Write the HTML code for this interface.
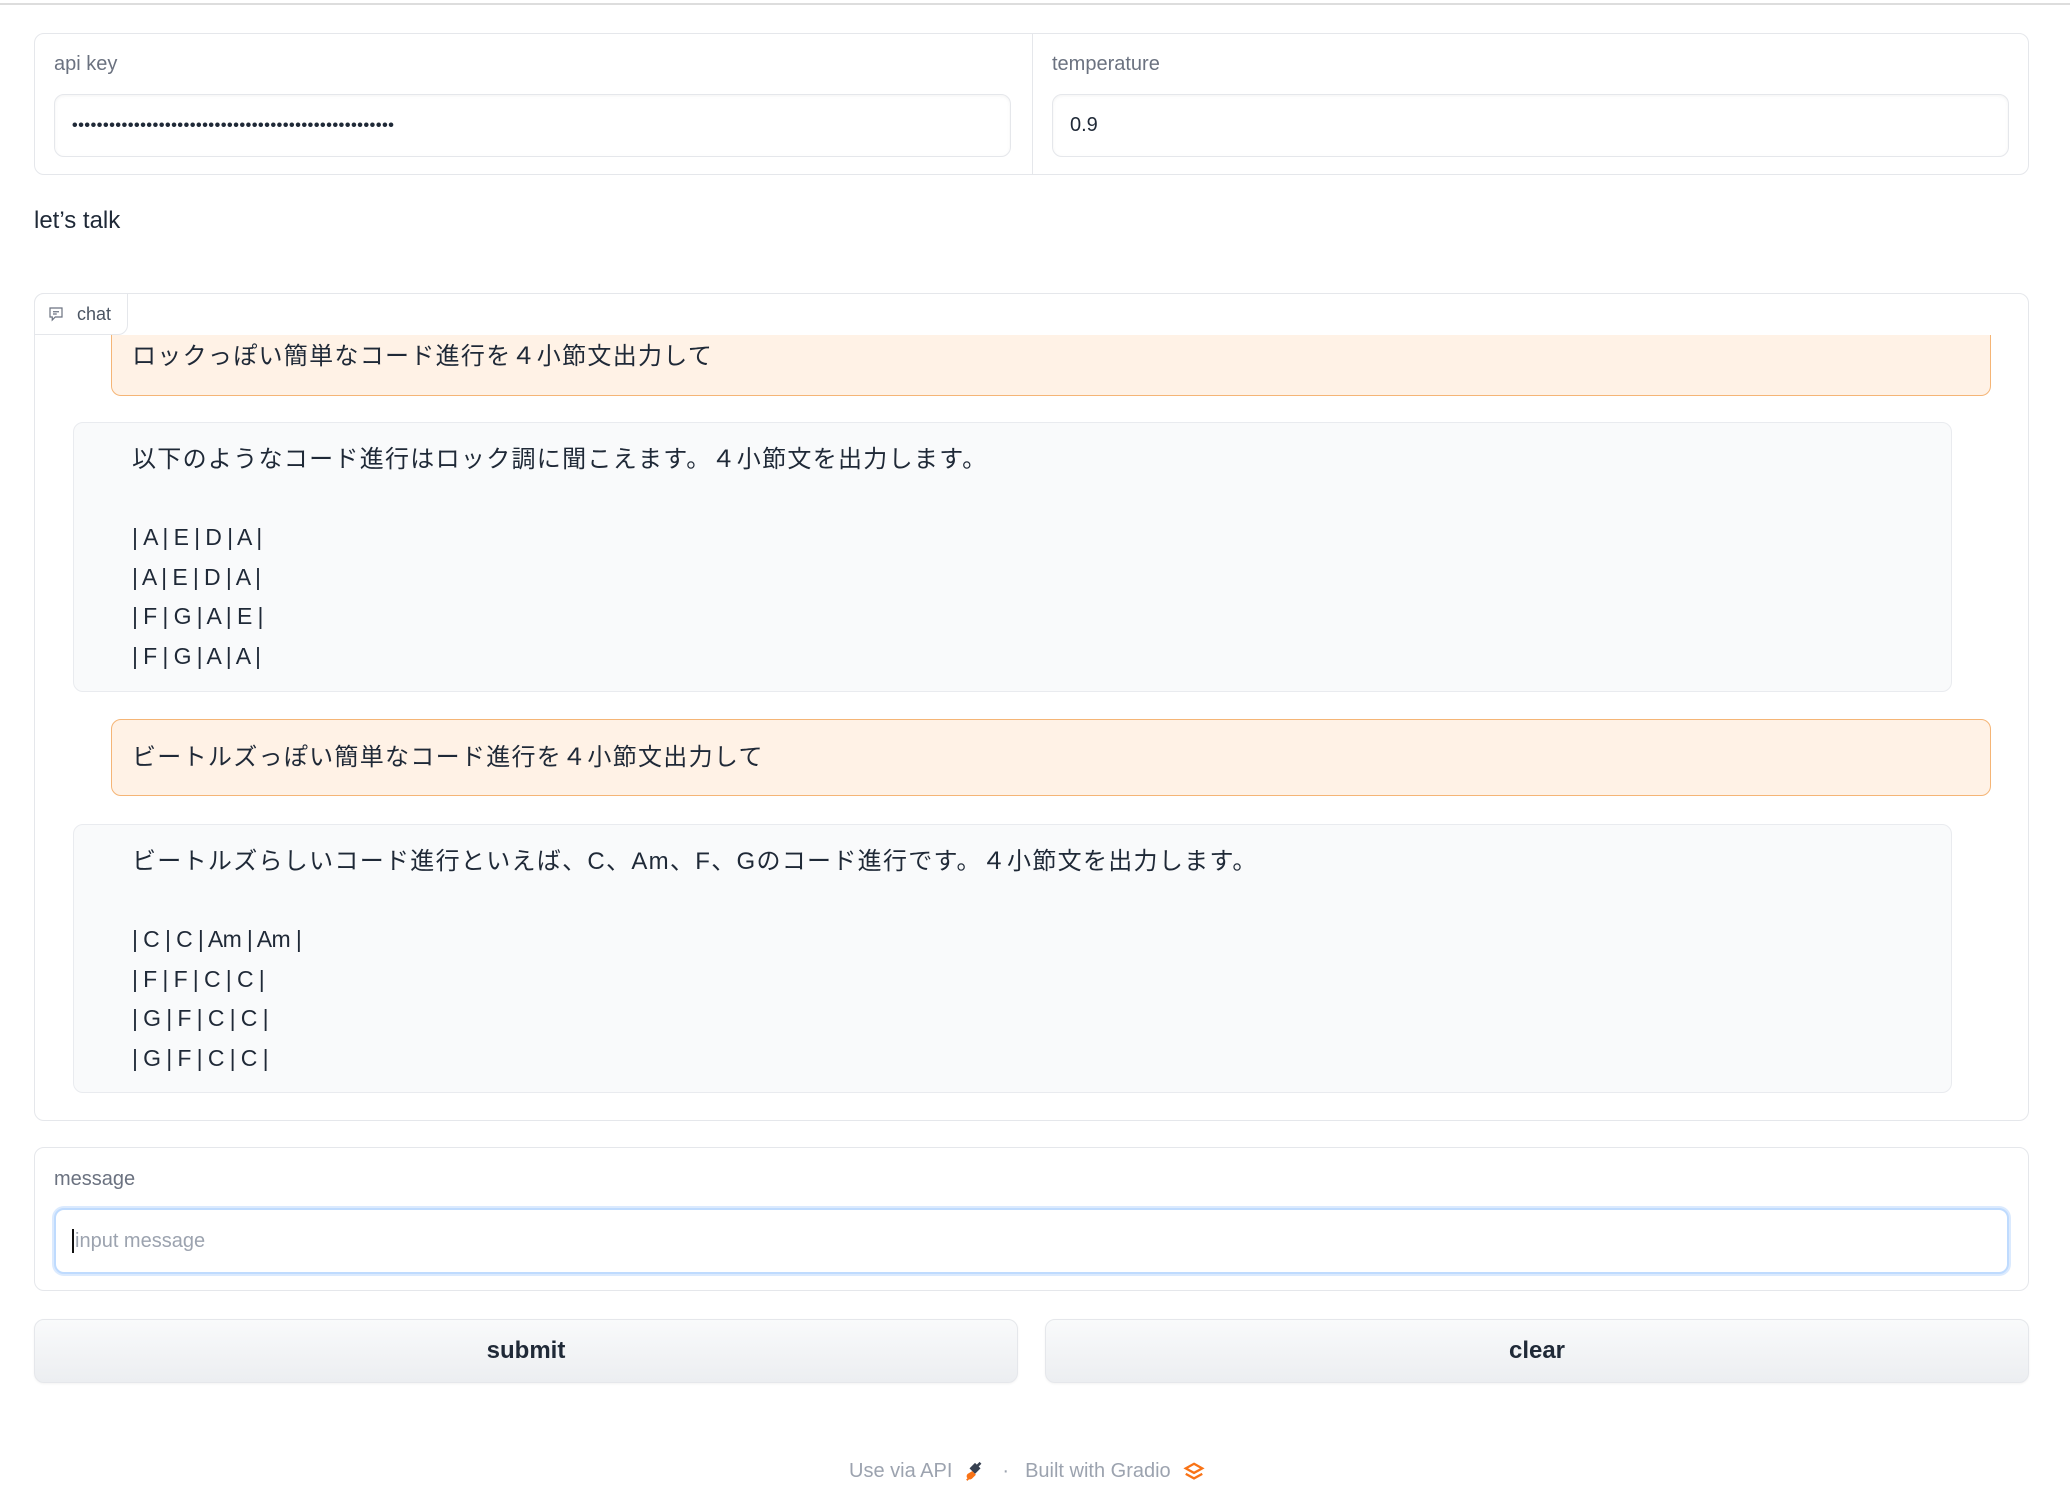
<!DOCTYPE html>
<html><head><meta charset="utf-8">
<style>
*{box-sizing:border-box;margin:0;padding:0}
html,body{width:2070px;height:1494px;background:#fff;overflow:hidden}
body{font-family:"Liberation Sans","Noto Sans CJK JP",sans-serif;color:#1f2937;position:relative}
.abs{position:absolute}
.topline{left:0;top:0;width:2070px;height:5px;border-bottom:2px solid #ddd}
.panel{border:1px solid #e5e7eb;border-radius:10px;background:#fff}
.label{font-size:20px;color:#6b7280}
.inp{border:1px solid #e5e7eb;border-radius:10px;background:#fff;box-shadow:inset 0 1px 3px rgba(0,0,0,.05);font-size:20px;display:flex;align-items:center;padding-left:17px}
.user{background:#fff2e6;border:1px solid #f5b576;border-radius:10px}
.bot{background:#f9fafb;border:1px solid #e9ebef;border-radius:10px}
.t{font-size:24px;color:#1f2937;line-height:38.5px}
.j{letter-spacing:1.3px}
.c{font-size:23px;letter-spacing:-0.6px}
.btn{background:linear-gradient(#f9fafb,#eceef1);border:1px solid #e5e7eb;border-radius:10px;font-weight:bold;font-size:24px;display:flex;align-items:center;justify-content:center;color:#1f2937;box-shadow:0 1px 2px rgba(0,0,0,.05)}
</style></head><body>
<div class="abs topline"></div>

<div class="abs panel" style="left:34px;top:33px;width:1995px;height:142px"></div>
<div class="abs" style="left:1032px;top:33px;width:1px;height:142px;background:#e5e7eb"></div>
<div class="abs label" style="left:54px;top:53px">api key</div>
<div class="abs inp" style="left:54px;top:94px;width:957px;height:63px;font-size:16px;letter-spacing:0.6px;font-weight:bold">••••••••••••••••••••••••••••••••••••••••••••••••••••</div>
<div class="abs label" style="left:1052px;top:53px">temperature</div>
<div class="abs inp" style="left:1052px;top:94px;width:957px;height:63px">0.9</div>

<div class="abs" style="left:34px;top:207px;font-size:24px;color:#1f2937">let’s talk</div>

<div class="abs panel" style="left:34px;top:293px;width:1995px;height:828px"></div>
<div class="abs" style="left:34px;top:293px;width:94px;height:42px;border:1px solid #e5e7eb;border-radius:10px 0 10px 0;background:#fff;display:flex;align-items:center;padding-left:12px;font-size:18px;color:#4b5563">
<svg width="18" height="18" viewBox="0 0 24 24" fill="none" stroke="#6b7280" stroke-width="1.6" style="margin-right:12px"><path d="M4 4h16v12h-9l-4 4v-4H4z"/><path d="M8 9h8M8 12h5"/></svg>chat</div>

<div class="abs user" style="left:111px;top:335px;width:1880px;height:61px;border-top:none;border-radius:0 0 10px 10px"></div>
<div class="abs t" style="left:132px;top:338px"><span class="j">ロックっぽい簡単なコード進行を４小節文出力して</span></div>

<div class="abs bot" style="left:73px;top:422px;width:1879px;height:270px"></div>
<div class="abs t" style="left:132px;top:441px"><span class="j">以下のようなコード進行はロック調に聞こえます。４小節文を出力します。</span><br><br><span class="c">| A | E | D | A |<br>| A | E | D | A |<br>| F | G | A | E |<br>| F | G | A | A |</span></div>

<div class="abs user" style="left:111px;top:719px;width:1880px;height:77px"></div>
<div class="abs t" style="left:132px;top:739px"><span class="j">ビートルズっぽい簡単なコード進行を４小節文出力して</span></div>

<div class="abs bot" style="left:73px;top:824px;width:1879px;height:269px"></div>
<div class="abs t" style="left:132px;top:843px"><span class="j">ビートルズらしいコード進行といえば、C、Am、F、Gのコード進行です。４小節文を出力します。</span><br><br><span class="c">| C | C | Am | Am |<br>| F | F | C | C |<br>| G | F | C | C |<br>| G | F | C | C |</span></div>

<div class="abs panel" style="left:34px;top:1147px;width:1995px;height:144px"></div>
<div class="abs label" style="left:54px;top:1168px">message</div>
<div class="abs inp" style="left:54px;top:1208px;width:1955px;height:66px;border:2px solid #bfdbfe;box-shadow:0 0 0 2px #dbeafe;color:#9ca3af;padding-left:16px"><span style="display:inline-block;width:2px;height:24px;background:#111;margin-right:1px"></span>input message</div>

<div class="abs btn" style="left:34px;top:1319px;width:984px;height:64px">submit</div>
<div class="abs btn" style="left:1045px;top:1319px;width:984px;height:64px">clear</div>

<div class="abs" style="left:849px;top:1460px;font-size:20px;color:#9ca3af;display:flex;align-items:center;white-space:nowrap">
Use via API
<svg width="22" height="22" viewBox="0 0 24 24" style="margin:0 16px 0 12px"><path d="M14 4l3-3 2 2-3 3 2 2-6 6-6-6 6-6z" fill="#374151"/><path d="M9 11l4 4-4 4c-1.5 1.5-3.5 1.5-5 0s-1.5-3.5 0-5z" fill="#f97316"/><path d="M3 21l2-2" stroke="#f97316" stroke-width="2"/></svg>
<span style="margin-right:16px">·</span>Built with Gradio
<svg width="22" height="22" viewBox="0 0 24 24" fill="none" stroke="#f97316" stroke-width="2.5" style="margin-left:12px"><path d="M12 3l9 5-9 5-9-5z"/><path d="M3 14l9 5 9-5"/></svg>
</div>
</body></html>
